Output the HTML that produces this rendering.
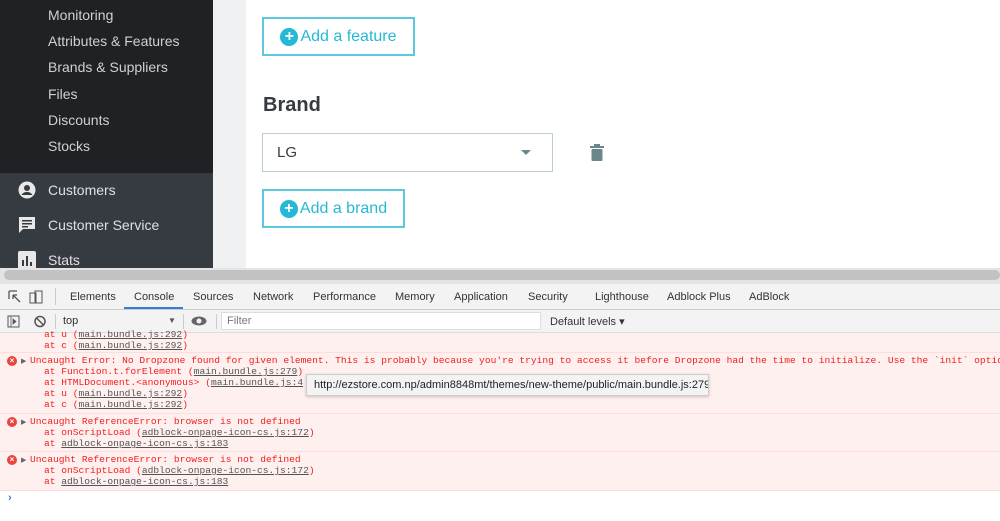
<!DOCTYPE html>
<html><head><meta charset="utf-8"><style>
*{margin:0;padding:0;box-sizing:border-box}
body{width:1000px;height:521px;overflow:hidden;background:#fff;font-family:"Liberation Sans",sans-serif;position:relative}
.abs{position:absolute}
.side{left:0;top:0;width:213px;height:268px;background:#363a41}
.sidetop{left:0;top:0;width:213px;height:173px;background:#202125}
.si{position:absolute;left:48px;color:#d0d0d0;font-size:14px}
.mi{position:absolute;left:48px;color:#e0e0e0;font-size:14px}
.gray{left:213px;top:0;width:33px;height:268px;background:#eff1f2}
.btn{position:absolute;border:2px solid #5bc8dd;background:#fff;color:#25b9d7;font-size:16px;display:flex;align-items:center;justify-content:center;gap:2px}
.plus{width:18px;height:18px;border-radius:50%;background:#25b9d7;color:#fff;font-size:16px;line-height:18px;text-align:center;font-weight:bold}
.mono{font-family:"Liberation Mono",monospace;font-size:9.6px;line-height:11px;color:#f0211f;white-space:pre;position:absolute;left:30px}
.u{text-decoration:underline;color:#545454}
.row{position:absolute;left:0;width:1000px;background:#fff0f0;border-top:1px solid #fdd}
.x{position:absolute;left:7px;width:10px;height:10px;border-radius:50%;background:#e8453c;color:#fff;font-size:8px;line-height:10px;text-align:center;font-weight:bold}
.tri{position:absolute;left:21px;font-size:7px;color:#666}
.tab{position:absolute;top:291px;font-size:11px;color:#333}
</style></head><body>
<div class="abs side"></div><div class="abs sidetop"></div>
<div class="si" style="top:7px">Monitoring</div>
<div class="si" style="top:33px">Attributes &amp; Features</div>
<div class="si" style="top:59px">Brands &amp; Suppliers</div>
<div class="si" style="top:86px">Files</div>
<div class="si" style="top:112px">Discounts</div>
<div class="si" style="top:138px">Stocks</div>
<svg class="abs" style="left:18px;top:181px" width="18" height="18" viewBox="0 0 18 18"><circle cx="9" cy="9" r="8.5" fill="#e8e8e8"/><circle cx="9" cy="7" r="3" fill="#363a41"/><path d="M3.5 14c1.5-2.5 3.5-3 5.5-3s4 .5 5.5 3" fill="#363a41"/></svg>
<div class="mi" style="top:182px">Customers</div>
<svg class="abs" style="left:18px;top:216px" width="18" height="18" viewBox="0 0 18 18"><path d="M1 1h16v12H5l-4 4z" fill="#e8e8e8"/><rect x="4" y="4" width="10" height="1.5" fill="#363a41"/><rect x="4" y="7" width="10" height="1.5" fill="#363a41"/><rect x="4" y="10" width="6" height="1.5" fill="#363a41"/></svg>
<div class="mi" style="top:217px">Customer Service</div>
<svg class="abs" style="left:18px;top:251px" width="18" height="17" viewBox="0 0 18 17"><rect x="0" y="0" width="18" height="18" rx="2" fill="#e8e8e8"/><rect x="4" y="9" width="2" height="6" fill="#363a41"/><rect x="8" y="5" width="2" height="10" fill="#363a41"/><rect x="12" y="11" width="2" height="4" fill="#363a41"/></svg>
<div class="mi" style="top:252px">Stats</div>
<div class="abs gray"></div>
<div class="btn" style="left:262px;top:17px;width:153px;height:39px"><span class="plus">+</span>Add a feature</div>
<div class="abs" style="left:263px;top:94px;font-size:20px;font-weight:bold;color:#363a41">Brand</div>
<div class="abs" style="left:262px;top:133px;width:291px;height:39px;border:1px solid #bbcdd2;font-size:15px;color:#363a41;padding:10px 14px">LG</div>
<div class="abs" style="left:521px;top:150px;width:0;height:0;border-left:5px solid transparent;border-right:5px solid transparent;border-top:5px solid #6c868e"></div>
<svg class="abs" style="left:590px;top:144px" width="14" height="18" viewBox="0 0 14 18"><rect x="0" y="2" width="14" height="2" fill="#6c868e"/><rect x="4" y="0" width="6" height="2" fill="#6c868e"/><rect x="1.5" y="5" width="11" height="12" rx="1" fill="#6c868e"/></svg>
<div class="btn" style="left:262px;top:189px;width:143px;height:39px"><span class="plus">+</span>Add a brand</div>
<div class="abs" style="left:0;top:268px;width:1000px;height:16px;background:#e4e4e4"></div>
<div class="abs" style="left:4px;top:270px;width:996px;height:10px;background:#c2c2c2;border-radius:5px"></div>
<div class="abs" style="left:0;top:284px;width:1000px;height:26px;background:#f3f3f3;border-bottom:1px solid #ccc"></div>
<svg class="abs" style="left:8px;top:290px" width="36" height="14"><path d="M1 1h8M1 1v8M5 5l7 7M5 5h4M5 5v4" stroke="#555" fill="none" stroke-width="1.3"/><rect x="22" y="3" width="6" height="10" fill="none" stroke="#555"/><rect x="27" y="1" width="7" height="12" fill="none" stroke="#555"/></svg>
<div class="abs" style="left:55px;top:288px;width:1px;height:17px;background:#ccc"></div>
<div class="tab" style="left:70px">Elements</div>
<div class="tab" style="left:134px">Console</div>
<div class="abs" style="left:124px;top:307px;width:59px;height:2px;background:#3879d9"></div>
<div class="tab" style="left:193px">Sources</div>
<div class="tab" style="left:253px">Network</div>
<div class="tab" style="left:313px">Performance</div>
<div class="tab" style="left:395px">Memory</div>
<div class="tab" style="left:454px">Application</div>
<div class="tab" style="left:528px">Security</div>
<div class="tab" style="left:595px">Lighthouse</div>
<div class="tab" style="left:667px">Adblock Plus</div>
<div class="tab" style="left:749px">AdBlock</div>
<div class="abs" style="left:0;top:310px;width:1000px;height:23px;background:#f3f3f3;border-bottom:1px solid #ddd"></div>
<svg class="abs" style="left:7px;top:315px" width="40" height="13"><rect x="1" y="1" width="11" height="11" fill="none" stroke="#555"/><path d="M4 1v11M6 4l3 2.5-3 2.5z" fill="#555" stroke="#555" stroke-width=".8"/><circle cx="33" cy="6.5" r="5" fill="none" stroke="#555" stroke-width="1.5"/><path d="M29.5 3l7 7" stroke="#555" stroke-width="1.5"/></svg>
<div class="abs" style="left:55px;top:314px;width:1px;height:15px;background:#ccc"></div>
<div class="abs" style="left:63px;top:315px;font-size:11px;color:#333">top</div>
<div class="abs" style="left:168px;top:316px;font-size:8px;color:#555">▼</div>
<div class="abs" style="left:183px;top:314px;width:1px;height:15px;background:#ccc"></div>
<svg class="abs" style="left:191px;top:316px" width="16" height="10"><ellipse cx="8" cy="5" rx="7.5" ry="4.5" fill="#666"/><circle cx="8" cy="5" r="2.5" fill="#f3f3f3"/></svg>
<div class="abs" style="left:216px;top:314px;width:1px;height:15px;background:#ccc"></div>
<div class="abs" style="left:221px;top:312px;width:320px;height:18px;background:#fff;border:1px solid #ddd;font-size:11px;color:#777;padding:2px 5px">Filter</div>
<div class="abs" style="left:550px;top:315px;font-size:11px;color:#333">Default levels ▾</div>
<div class="row" style="top:333px;height:19px;border-top:none"></div>
<div class="mono" style="top:329px;left:44px">at u (<span class="u">main.bundle.js:292</span>)</div>
<div class="mono" style="top:340px;left:44px">at c (<span class="u">main.bundle.js:292</span>)</div>
<div class="row" style="top:352px;height:61px"></div>
<div class="x" style="top:356px">×</div><div class="tri" style="top:357px">▶</div>
<div class="mono" style="top:355px">Uncaught Error: No Dropzone found for given element. This is probably because you're trying to access it before Dropzone had the time to initialize. Use the `init` option</div>
<div class="mono" style="top:366px;left:44px">at Function.t.forElement (<span class="u">main.bundle.js:279</span>)</div>
<div class="mono" style="top:377px;left:44px">at HTMLDocument.&lt;anonymous&gt; (<span class="u">main.bundle.js:4</span></div>
<div class="mono" style="top:388px;left:44px">at u (<span class="u">main.bundle.js:292</span>)</div>
<div class="mono" style="top:399px;left:44px">at c (<span class="u">main.bundle.js:292</span>)</div>
<div class="abs" style="left:306px;top:374px;width:403px;height:22px;background:#f3f3f3;border:1px solid #ccc;box-shadow:0 1px 3px rgba(0,0,0,.2);font-size:11px;color:#222;padding:4px 7px;white-space:nowrap;overflow:hidden">http://ezstore.com.np/admin8848mt/themes/new-theme/public/main.bundle.js:279</div>
<div class="row" style="top:413px;height:38px"></div>
<div class="x" style="top:417px">×</div><div class="tri" style="top:418px">▶</div>
<div class="mono" style="top:416px">Uncaught ReferenceError: browser is not defined</div>
<div class="mono" style="top:427px;left:44px">at onScriptLoad (<span class="u">adblock-onpage-icon-cs.js:172</span>)</div>
<div class="mono" style="top:438px;left:44px">at <span class="u">adblock-onpage-icon-cs.js:183</span></div>
<div class="row" style="top:451px;height:39px"></div>
<div class="x" style="top:455px">×</div><div class="tri" style="top:456px">▶</div>
<div class="mono" style="top:454px">Uncaught ReferenceError: browser is not defined</div>
<div class="mono" style="top:465px;left:44px">at onScriptLoad (<span class="u">adblock-onpage-icon-cs.js:172</span>)</div>
<div class="mono" style="top:476px;left:44px">at <span class="u">adblock-onpage-icon-cs.js:183</span></div>
<div class="abs" style="left:0;top:490px;width:1000px;height:1px;background:#fdd"></div>
<div class="abs" style="left:8px;top:492px;font-size:11px;color:#3879d9;font-weight:bold">›</div>
</body></html>
